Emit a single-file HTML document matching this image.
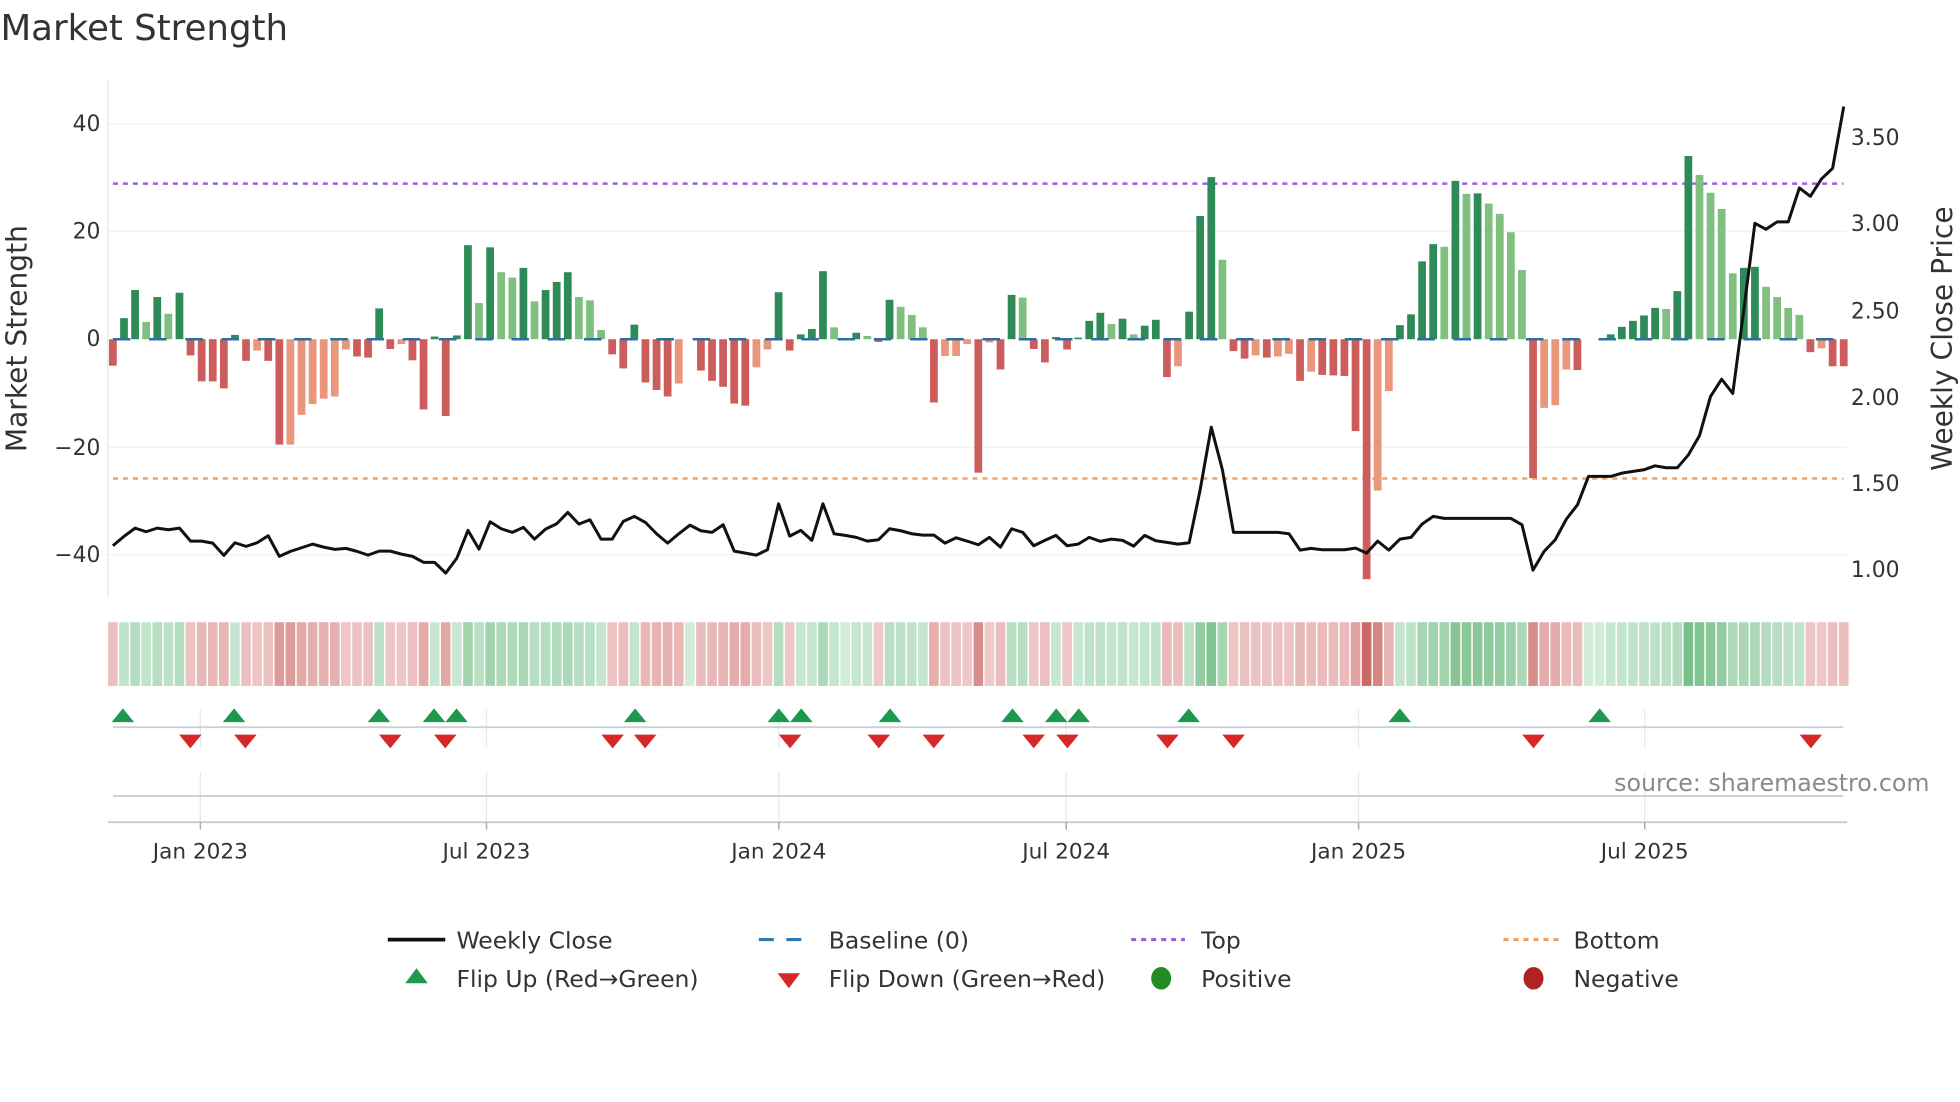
<!DOCTYPE html>
<html><head><meta charset="utf-8"><style>
html,body{margin:0;padding:0;background:#fff;width:1960px;height:1102px;overflow:hidden}
svg{display:block}
text{font-family:"DejaVu Sans","Liberation Sans",sans-serif;fill:#333}
</style></head><body>
<svg id="s" width="1960" height="1102" viewBox="0 0 1568 882" xmlns="http://www.w3.org/2000/svg">
<text x="0" y="32" font-size="28.5">Market Strength</text>
<g stroke="#eef0f3" stroke-width="1">
<line x1="86" y1="99" x2="1478" y2="99"/><line x1="86" y1="185" x2="1478" y2="185"/>
<line x1="86" y1="358" x2="1478" y2="358"/><line x1="86" y1="444" x2="1478" y2="444"/>
</g>
<line x1="86" y1="65" x2="86" y2="478" stroke="#e4e6ea" stroke-width="1"/>
<g font-size="17.5" text-anchor="end">
<text x="80" y="105">40</text><text x="80" y="191">20</text><text x="80" y="277">0</text>
<text x="80" y="364">−20</text><text x="80" y="450">−40</text>
</g>
<g font-size="17.5">
<text x="1481" y="116">3.50</text><text x="1481" y="185">3.00</text><text x="1481" y="255">2.50</text>
<text x="1481" y="324">2.00</text><text x="1481" y="393">1.50</text><text x="1481" y="462">1.00</text>
</g>
<text transform="translate(21,271) rotate(-90)" font-size="22.5" text-anchor="middle">Market Strength</text>
<text transform="translate(1562,271) rotate(-90)" font-size="22.5" text-anchor="middle">Weekly Close Price</text>
<line x1="90" y1="147" x2="1475" y2="147" stroke="#9b5fe0" stroke-width="2" stroke-dasharray="4,4"/>
<line x1="90" y1="383" x2="1475" y2="383" stroke="#f0a060" stroke-width="2" stroke-dasharray="4,4"/>
<g id="bars"></g>
<line x1="90" y1="271.5" x2="1475" y2="271.5" stroke="#2f6fa0" stroke-width="2" stroke-dasharray="14,15"/>
<polyline id="price" fill="none" stroke="#111" stroke-width="2.4" stroke-linejoin="round"/>
<g id="heat"></g>
<g stroke="#e6e8ec" stroke-width="1">
<line x1="160" y1="568" x2="160" y2="598"/><line x1="389" y1="568" x2="389" y2="598"/>
<line x1="623" y1="568" x2="623" y2="598"/><line x1="853" y1="568" x2="853" y2="598"/>
<line x1="1087" y1="568" x2="1087" y2="598"/><line x1="1316" y1="568" x2="1316" y2="598"/>
<line x1="160" y1="618" x2="160" y2="658"/><line x1="389" y1="618" x2="389" y2="658"/>
<line x1="623" y1="618" x2="623" y2="658"/><line x1="853" y1="618" x2="853" y2="658"/>
<line x1="1087" y1="618" x2="1087" y2="658"/><line x1="1316" y1="618" x2="1316" y2="658"/>
</g>
<line x1="90" y1="582" x2="1475" y2="582" stroke="#ccd0d6" stroke-width="1.5"/>
<line x1="90" y1="637" x2="1475" y2="637" stroke="#ccd0d6" stroke-width="1.5"/>
<line x1="86" y1="658" x2="1478" y2="658" stroke="#c8ccd2" stroke-width="1.5"/>
<g stroke="#aaa" stroke-width="1.2">
<line x1="160" y1="658" x2="160" y2="664"/><line x1="389" y1="658" x2="389" y2="664"/>
<line x1="623" y1="658" x2="623" y2="664"/><line x1="853" y1="658" x2="853" y2="664"/>
<line x1="1087" y1="658" x2="1087" y2="664"/><line x1="1316" y1="658" x2="1316" y2="664"/>
</g>
<g id="sig"></g>
<text x="1544" y="633" font-size="19" text-anchor="end" style="fill:#8a8a8a">source: sharemaestro.com</text>
<g font-size="17.3" text-anchor="middle">
<text x="160" y="687">Jan 2023</text><text x="389" y="687">Jul 2023</text><text x="623" y="687">Jan 2024</text>
<text x="853" y="687">Jul 2024</text><text x="1087" y="687">Jan 2025</text><text x="1316" y="687">Jul 2025</text>
</g>
<g font-size="18.8">
<line x1="310" y1="752" x2="356" y2="752" stroke="#111" stroke-width="3"/>
<text x="365" y="759">Weekly Close</text>
<line x1="607" y1="752" x2="650" y2="752" stroke="#2f7ab0" stroke-width="2.5" stroke-dasharray="12,10"/>
<text x="663" y="759">Baseline (0)</text>
<line x1="905" y1="752" x2="948" y2="752" stroke="#9b5fe0" stroke-width="2.5" stroke-dasharray="4,4"/>
<text x="961" y="759">Top</text>
<line x1="1203" y1="752" x2="1247" y2="752" stroke="#f0a060" stroke-width="2.5" stroke-dasharray="4,4"/>
<text x="1259" y="759">Bottom</text>
<polygon points="324,787 342,787 333,775" fill="#1a9a4a"/>
<text x="365" y="790">Flip Up (Red→Green)</text>
<polygon points="622,779 640,779 631,791" fill="#d62828"/>
<text x="663" y="790">Flip Down (Green→Red)</text>
<ellipse cx="929" cy="783" rx="8" ry="9" fill="#228b22"/>
<text x="961" y="790">Positive</text>
<ellipse cx="1227" cy="783" rx="8" ry="9" fill="#b22222"/>
<text x="1259" y="790">Negative</text>
</g>
</svg>
<script>
var B="R-4.9 D3.9 D9.1 L3.2 D7.8 L4.7 D8.6 R-3 R-7.8 R-7.8 R-9.1 D0.8 R-4 S-2.1 R-4 R-19.5 S-19.5 S-14 S-12 S-11 S-10.6 S-1.9 R-3.2 R-3.4 D5.7 R-1.8 S-0.9 R-3.9 R-13 D0.5 R-14.2 D0.7 D17.4 L6.7 D17 L12.4 L11.4 D13.2 L7 D9.1 D10.6 D12.4 L7.8 L7.2 L1.7 R-2.8 R-5.4 D2.7 R-8 R-9.4 R-10.6 S-8.2 Z0 R-5.8 R-7.7 R-8.8 R-11.9 R-12.3 S-5.2 S-1.9 D8.7 R-2.1 D0.9 D1.9 D12.6 L2.2 Z0 D1.2 L0.6 R-0.5 D7.3 L6 L4.5 L2.2 R-11.7 S-3.1 S-3.1 S-0.9 R-24.7 S-0.6 R-5.6 D8.2 L7.7 R-1.8 R-4.3 D0.4 R-1.9 D0.3 D3.4 D4.9 L2.8 D3.8 L0.9 D2.5 D3.6 R-7 S-5 D5.1 D22.8 D30 L14.7 R-2.2 R-3.6 S-3 R-3.4 S-3.2 S-2.7 R-7.7 S-6 R-6.6 R-6.7 R-6.8 R-17 R-44.4 S-28 S-9.6 D2.6 D4.6 D14.4 D17.6 L17.1 D29.3 L26.9 D27 L25.1 L23.2 L19.8 L12.8 R-25.7 S-12.7 S-12.2 S-5.6 R-5.7 Z0 Z0 D0.9 D2.3 D3.4 D4.4 D5.8 L5.6 D8.9 D33.9 L30.4 L27.1 L24.1 L12.2 D13.2 D13.4 L9.7 L7.8 L5.8 L4.5 R-2.4 S-1.7 R-5 R-5".split(" ");
var P=[1398,1370,1345,1356,1345,1350,1345,1384,1384,1390,1427,1389,1400,1389,1368,1430,1415,1404,1393,1402,1409,1406,1415,1426,1414,1414,1423,1430,1448,1448,1480,1435,1352,1408,1326,1347,1358,1343,1378,1348,1332,1298,1333,1320,1378,1378,1325,1310,1328,1362,1390,1362,1336,1353,1358,1335,1414,1420,1426,1410,1272,1369,1352,1382,1272,1362,1367,1373,1384,1380,1347,1353,1362,1366,1366,1390,1374,1384,1395,1373,1402,1347,1358,1398,1382,1367,1398,1393,1373,1385,1378,1382,1399,1367,1383,1388,1393,1389,1230,1042,1170,1358,1358,1358,1358,1358,1362,1411,1406,1410,1410,1410,1405,1420,1384,1411,1378,1373,1333,1310,1316,1316,1316,1316,1316,1316,1316,1335,1471,1415,1380,1318,1275,1190,1190,1190,1180,1175,1170,1158,1164,1164,1125,1068,950,898,941,688,430,448,426,426,324,349,297,265,80];
var C={D:"#2e8b57",L:"#7fbf7f",R:"#cd5c5c",S:"#e9967a"};
var ns="http://www.w3.org/2000/svg";
function el(t,a,p){var e=document.createElementNS(ns,t);for(var k in a)e.setAttribute(k,a[k]);p.appendChild(e);return e;}
var bg=document.getElementById("bars"),hg=document.getElementById("heat"),pts=[];
function mix(a,b,t){return "rgb("+a.map(function(v,i){return Math.round(v+(b[i]-v)*t)}).join(",")+")";}
for(var i=0;i<B.length;i++){
 var t=B[i][0],v=parseFloat(B[i].slice(1)),x=90+8.88*i;
 if(v!==0){var h=Math.abs(v)*4.325;el("rect",{x:x-3.1,y:v>0?271.5-h:271.5,width:6.2,height:h,fill:C[t]},bg);}
 var m=Math.min(1,Math.abs(v)/40)*0.75+0.12,col;
 if(t==="D"||t==="L"||(t==="Z"))col=mix([216,239,224],[92,176,110],t==="Z"?0.05:m);
 else col=mix([245,218,218],[196,90,85],m);
 el("rect",{x:x-4.44+0.6,y:498,width:7.7,height:51,fill:col},hg);
 if(i<P.length)pts.push(x.toFixed(1)+","+(64+P[i]/3.75).toFixed(1));
}
document.getElementById("price").setAttribute("points",pts.join(" "));
var sg=document.getElementById("sig");
[98,187,303,347,365,508,623,641,712,810,845,863,951,1120,1280].forEach(function(x){el("polygon",{points:(x-9)+",578 "+(x+9)+",578 "+x+",567",fill:"#1a9a4a"},sg);});
[152,196,312,356,490,516,632,703,747,827,854,934,987,1227,1449].forEach(function(x){el("polygon",{points:(x-9)+",588 "+(x+9)+",588 "+x+",599",fill:"#d62828"},sg);});
</script>
</body></html>
